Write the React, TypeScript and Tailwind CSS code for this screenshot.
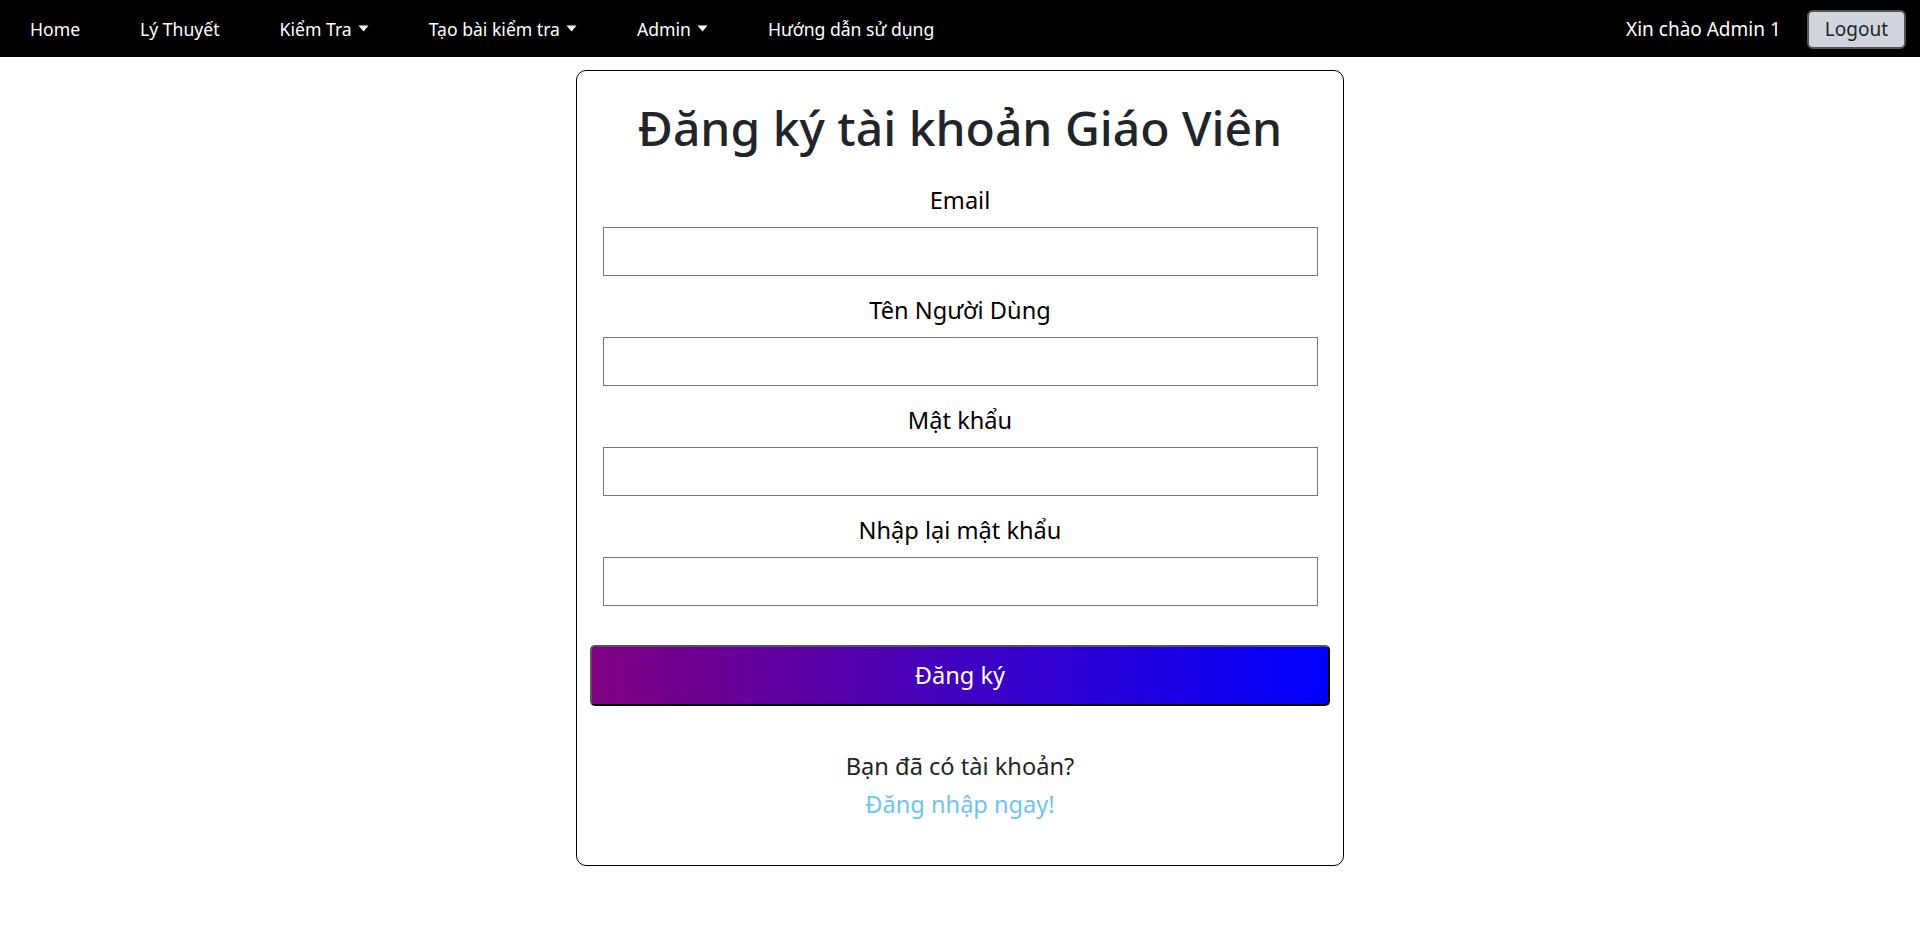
import React from "react";

function Caret() {
  return (
    <svg width="11" height="7" viewBox="0 0 11 7" className="ml-[6px] inline-block">
      <path d="M0.5 0.5 H10.5 L5.5 6.5 Z" fill="white" />
    </svg>
  );
}

const navItems: { label: string; dropdown?: boolean }[] = [
  { label: "Home" },
  { label: "Lý Thuyết" },
  { label: "Kiểm Tra", dropdown: true },
  { label: "Tạo bài kiểm tra", dropdown: true },
  { label: "Admin", dropdown: true },
  { label: "Hướng dẫn sử dụng" },
];

const fields = ["Email", "Tên Người Dùng", "Mật khẩu", "Nhập lại mật khẩu"];

export default function App() {
  return (
    <div className="min-h-[931px] bg-white" style={{ fontFamily: '"Noto Sans", sans-serif' }}>
      <nav className="h-[57px] bg-black flex items-center justify-between pt-[1px]">
        <ul className="flex items-center">
          {navItems.map((item) => (
            <li
              key={item.label}
              className="px-[30px] text-white text-[17.6px] flex items-center cursor-pointer whitespace-nowrap"
            >
              {item.label}
              {item.dropdown && <Caret />}
            </li>
          ))}
        </ul>
        <div className="flex items-center pr-[14px]">
          <span className="text-white text-[19px] mr-[26px]">Xin chào Admin 1</span>
          <button className="h-[39px] px-[16px] bg-[#d1d5db] text-[#212529] text-[19px] rounded-[6px] border-2 border-[#555]">
            Logout
          </button>
        </div>
      </nav>

      <main className="flex justify-center pt-[13px]">
        <div className="w-[768px] border border-black rounded-[10px] px-[13px] pt-[25px] pb-[42px] text-center">
          <h1 className="text-[48px] leading-[64px] font-medium text-[#212529]">
            Đăng ký tài khoản Giáo Viên
          </h1>
          <form className="mt-[22px]" onSubmit={(e) => e.preventDefault()}>
            {fields.map((f, i) => (
              <div key={f} className={i === 0 ? "" : "mt-[16px]"}>
                <label className="block text-[23.6px] leading-[36px] text-black">{f}</label>
                <input
                  type={f.startsWith("Email") ? "email" : f.includes("khẩu") ? "password" : "text"}
                  className="block mx-[13px] mt-[9px] w-[715px] h-[49px] border border-[#767676] bg-white outline-none px-2"
                />
              </div>
            ))}
            <button
              type="submit"
              className="mt-[39px] w-full h-[61px] rounded-[5px] border-2 border-t-[#555] border-l-[#555] border-b-black border-r-black bg-[linear-gradient(to_right,#800080,#0000ff)] text-white text-[23.6px]"
            >
              Đăng ký
            </button>
          </form>
          <div className="mt-[41px] text-[23.6px] text-[#212529] leading-[38px]">
            <p>Bạn đã có tài khoản?</p>
            <a href="#" className="text-[#72c3ec]">
              Đăng nhập ngay!
            </a>
          </div>
        </div>
      </main>
    </div>
  );
}
